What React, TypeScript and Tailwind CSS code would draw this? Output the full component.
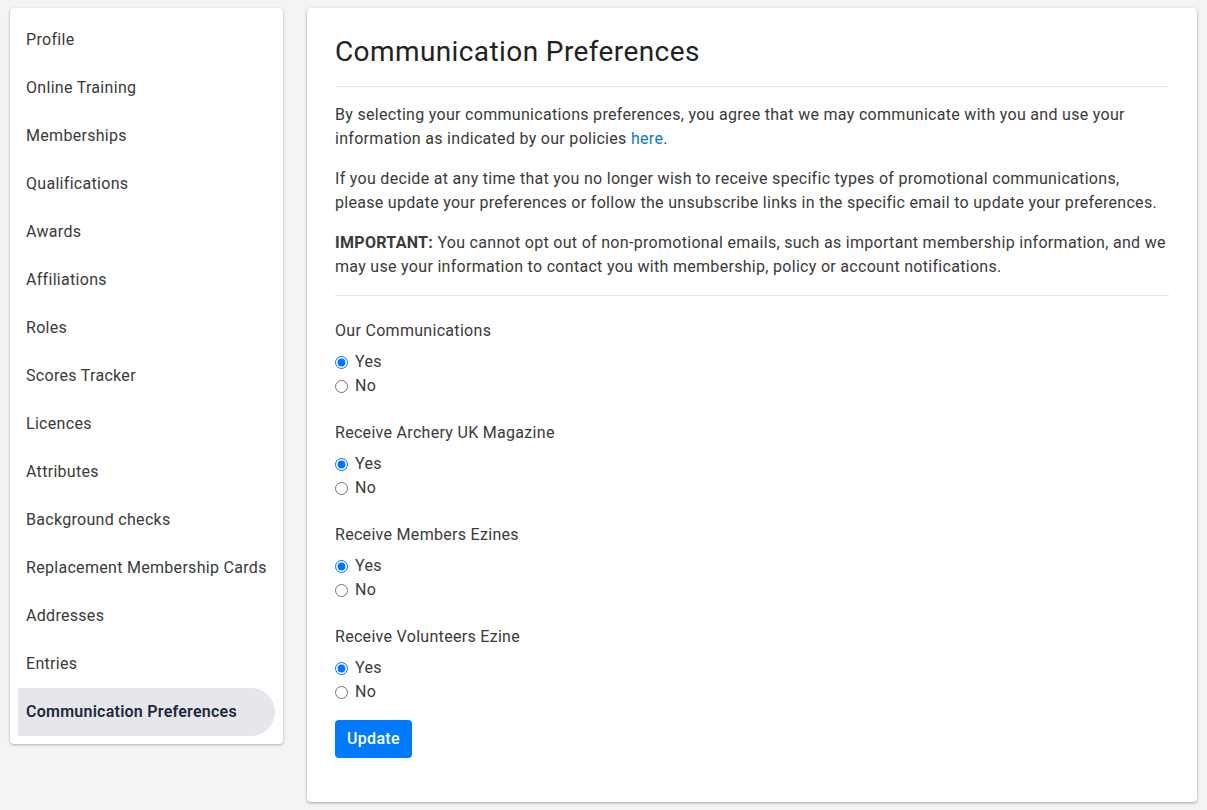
import React from "react";

const menuItems = [
  "Profile",
  "Online Training",
  "Memberships",
  "Qualifications",
  "Awards",
  "Affiliations",
  "Roles",
  "Scores Tracker",
  "Licences",
  "Attributes",
  "Background checks",
  "Replacement Membership Cards",
  "Addresses",
  "Entries",
  "Communication Preferences",
];

const preferenceGroups = [
  { name: "ourComms", label: "Our Communications" },
  { name: "magazine", label: "Receive Archery UK Magazine" },
  { name: "memberEzines", label: "Receive Members Ezines" },
  { name: "volunteerEzine", label: "Receive Volunteers Ezine" },
];

function RadioGroup({ name, label }: { name: string; label: string }) {
  return (
    <div className="mb-[23px]">
      <p className="leading-6">{label}</p>
      <div className="mt-[7px] flex flex-col">
        <label className="flex h-6 items-center gap-[7px]">
          <input
            type="radio"
            name={name}
            defaultChecked
            className="m-0 h-[13px] w-[13px] accent-[#0075ff]"
          />
          <span>Yes</span>
        </label>
        <label className="flex h-6 items-center gap-[7px]">
          <input type="radio" name={name} className="m-0 h-[13px] w-[13px] accent-[#0075ff]" />
          <span>No</span>
        </label>
      </div>
    </div>
  );
}

export default function App() {
  const activeItem = "Communication Preferences";

  return (
    <div className="flex min-h-screen items-start gap-6 bg-[#f3f4f6] px-[10px] py-2 font-['Roboto',sans-serif] text-base tracking-[0.3px] text-[#3a3a3a]">
      <aside className="w-[273px] shrink-0 rounded bg-white py-2 shadow-[0_1px_3px_rgba(0,0,0,0.3)]">
        <nav className="flex flex-col px-2">
          {menuItems.map((item) => (
            <a
              key={item}
              className={
                item === activeItem
                  ? "flex h-12 items-center rounded-l-md rounded-r-full bg-[#e5e7eb] px-2 font-semibold tracking-[0.25px] text-[#1e293b]"
                  : "flex h-12 items-center px-2 text-[#3a3a3a]"
              }
            >
              {item}
            </a>
          ))}
        </nav>
      </aside>

      <main className="w-[891px] rounded bg-white px-7 pb-11 pt-7 shadow-[0_1px_3px_rgba(0,0,0,0.35)]">
        <h1 className="text-[28px] font-normal leading-8 tracking-[0.4px] text-[#222]">
          Communication Preferences
        </h1>
        <hr className="mt-[18px] border-t border-[#e5e5e5]" />

        <div className="mt-4 space-y-4 leading-6">
          <p>
            By selecting your communications preferences, you agree that we may communicate with you
            and use your information as indicated by our policies{" "}
            <a className="text-[#0a7bc2]">here</a>.
          </p>
          <p>
            If you decide at any time that you no longer wish to receive specific types of
            promotional communications, please update your preferences or follow the unsubscribe
            links in the specific email to update your preferences.
          </p>
          <p>
            <strong className="font-bold">IMPORTANT:</strong> You cannot opt out of non-promotional
            emails, such as important membership information, and we may use your information to
            contact you with membership, policy or account notifications.
          </p>
        </div>
        <hr className="mb-[23px] mt-4 border-t border-[#e5e5e5]" />

        {preferenceGroups.map((group) => (
          <RadioGroup key={group.name} name={group.name} label={group.label} />
        ))}

        <button
          type="button"
          className="-mt-[7px] h-[38px] rounded bg-[#007bff] px-3 font-medium text-white"
        >
          Update
        </button>
      </main>
    </div>
  );
}
